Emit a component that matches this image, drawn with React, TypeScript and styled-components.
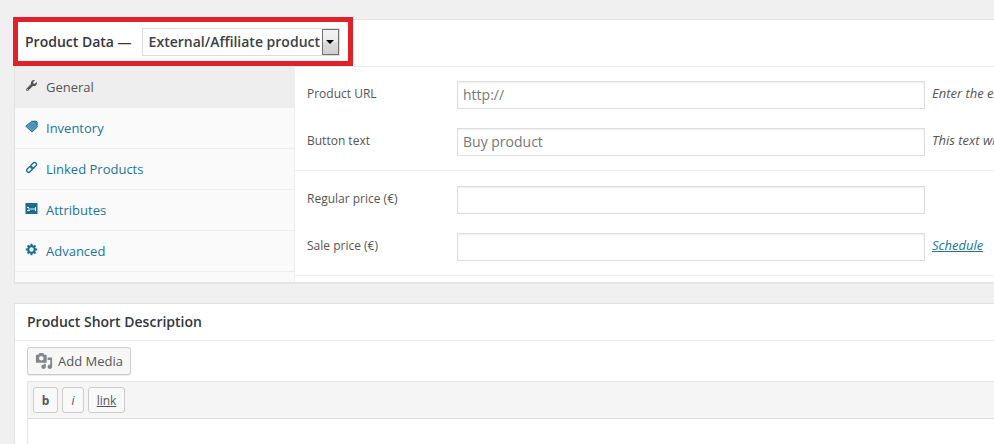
import React from "react";
import styled, { createGlobalStyle } from "styled-components";
import { FaWrench } from "react-icons/fa";

const GlobalStyle = createGlobalStyle`
  * { box-sizing: border-box; }
  html, body { margin: 0; background: #f0f0f0; overflow-x: hidden; }
  body, button, input, select { font-family: "Open Sans", sans-serif; }
`;

const Page = styled.main`
  display: flex;
  flex-direction: column;
  gap: 20px;
  padding: 19px 0 0 14px;
  color: #555;
  font-size: 13px;
`;

const Panel = styled.section`
  background: #fff;
  border: 1px solid #e2e2e2;
  border-right: 0;
  box-shadow: 0 1px 1px rgba(0, 0, 0, 0.04);
`;

const PanelHeader = styled.header`
  display: flex;
  border-bottom: 1px solid #ebebeb;
`;

const TypePicker = styled.div`
  position: relative;
  display: flex;
  align-items: center;
  gap: 10px;
  height: 46px;
  padding: 0 13px 2px 10px;

  &::after {
    content: "";
    position: absolute;
    inset: -3px 0 0 -2px;
    border: 5px solid #e02129;
    pointer-events: none;
  }
`;

const TypeLabel = styled.label`
  color: #32373c;
  font-size: 14px;
  font-weight: 600;
  line-height: 20px;
  white-space: nowrap;
`;

const SelectWrap = styled.div`
  position: relative;
  width: 198px;
`;

const Select = styled.select`
  display: block;
  appearance: none;
  width: 100%;
  height: 28px;
  padding: 0 0 2px 6px;
  border: 1px solid #ddd;
  border-radius: 0;
  background: #fff;
  color: #3c4146;
  font-size: 14px;
  font-weight: 600;
`;

const SelectArrow = styled.span`
  position: absolute;
  top: 1px;
  right: 1px;
  bottom: 1px;
  display: flex;
  align-items: center;
  justify-content: center;
  width: 17px;
  border: 1px solid #707070;
  background: linear-gradient(#f3f3f3 0%, #ebebeb 50%, #dcdcdc 51%, #cfcfcf 100%);
  pointer-events: none;
`;

const PanelBody = styled.div`
  display: flex;
`;

const Tabs = styled.nav`
  flex: 0 0 280px;
  padding-bottom: 10px;
  border-right: 1px solid #eee;
  background: #fafafa;
`;

const Tab = styled.a<{ $active?: boolean }>`
  display: flex;
  align-items: center;
  gap: 8px;
  height: 41px;
  padding: 0 10px;
  border-bottom: 1px solid #eee;
  background: ${(p) => (p.$active ? "#eee" : "transparent")};
  color: ${(p) => (p.$active ? "#555" : "#21759b")};
  line-height: 20px;
  text-decoration: none;

  svg {
    width: 13px;
    height: 13px;
    margin-bottom: 3px;
  }
`;

const WrenchIcon = styled(FaWrench)`
  padding: 1px;
`;

const Fields = styled.div`
  flex: 1;
  min-width: 0;
`;

const FieldGroup = styled.div`
  display: grid;
  gap: 19px;
  padding: 14px 0;
  border-bottom: 1px solid #eee;

  & + & {
    padding-top: 15px;
  }
`;

const Field = styled.div`
  display: flex;
  align-items: center;
  height: 28px;
  padding-left: 12px;
`;

const FieldLabel = styled.label`
  flex: 0 0 150px;
  padding-bottom: 3px;
  font-size: 12px;
  line-height: 18px;
`;

const TextInput = styled.input`
  flex: 1;
  min-width: 0;
  height: 28px;
  padding: 0 5px 2px;
  border: 1px solid #ddd;
  border-radius: 0;
  background: #fff;
  box-shadow: inset 0 1px 2px rgba(0, 0, 0, 0.07);
  color: #32373c;
  font-size: 14px;

  &::placeholder {
    color: #777;
    opacity: 1;
  }
`;

const Note = styled.span`
  flex: 0 0 69px;
  padding: 0 0 4px 7px;
  overflow: hidden;
  font-style: italic;
  line-height: 20px;
  white-space: nowrap;
`;

const NoteLink = styled.a`
  color: #21759b;
`;

const Title = styled.h2`
  margin: 0;
  padding: 8px 12px;
  color: #32373c;
  font-size: 14px;
  font-weight: 600;
  line-height: 20px;
`;

const EditorArea = styled.div`
  padding: 6px 0 0 12px;
`;

const MediaButton = styled.button`
  display: flex;
  align-items: center;
  gap: 5px;
  height: 28px;
  padding: 0 7px;
  border: 1px solid #ccc;
  border-radius: 3px;
  background: #f7f7f7;
  box-shadow: 0 1px 0 rgba(0, 0, 0, 0.08);
  color: #555;
  font-size: 13px;

  svg {
    width: 18px;
    height: 18px;
    fill: #82878c;
  }
`;

const Editor = styled.div`
  margin-top: 6px;
  border: 1px solid #e5e5e5;
  border-right: 0;
`;

const Toolbar = styled.div`
  display: flex;
  gap: 4px;
  padding: 5px;
  border-bottom: 1px solid #ddd;
  background: #f5f5f5;
`;

const toolWidths = { bold: 25, italic: 22, link: 37 };

const ToolButton = styled.button<{ $look: "bold" | "italic" | "link" }>`
  width: ${(p) => toolWidths[p.$look]}px;
  height: 26px;
  padding: 0;
  border: 1px solid #ccc;
  border-radius: 3px;
  background: #f9f9f9;
  color: #555;
  font-size: 12px;
  font-weight: ${(p) => (p.$look === "bold" ? 700 : 400)};
  font-style: ${(p) => (p.$look === "italic" ? "italic" : "normal")};
  text-decoration: ${(p) => (p.$look === "link" ? "underline" : "none")};
`;

const EditorText = styled.textarea`
  display: block;
  width: 100%;
  height: 25px;
  border: 0;
  background: #fff;
  resize: none;
`;

const TagsIcon = () => (
  <svg viewBox="0 0 13 13" aria-hidden="true">
    <path d="M.8 6.200 6.800 1.200l4 .8L12.400 7 7 12z" fill="#5b9cc0" stroke="#1a6d95" strokeLinejoin="round" />
    <path d="M3 6.500 7.500 2.700M4.500 8 9.300 3.900M6 9.600l4.600-4" stroke="#2d7ca4" strokeWidth=".7" />
    <path d="M8.500 1 12 1.500 12.300 5" fill="none" stroke="#1a6d95" />
  </svg>
);

const LinkIcon = () => (
  <svg viewBox="0 0 13 13" fill="none" stroke="#1a6d95" strokeWidth="1.400" aria-hidden="true">
    <rect x="-3.300" y="-1.900" width="6.600" height="3.800" rx="1.900" transform="translate(8.600 4.400) rotate(-45)" />
    <rect x="-3.300" y="-1.900" width="6.600" height="3.800" rx="1.900" transform="translate(4.600 8.400) rotate(-45)" />
  </svg>
);

const AttributesIcon = () => (
  <svg viewBox="0 0 13 13" aria-hidden="true">
    <rect x=".5" y="1" width="12" height="11" rx=".5" fill="#1a6d95" />
    <path d="M2 5.500h2M2 8.500h3M3 7h7M10.500 5v4" stroke="#fff" strokeWidth=".9" />
  </svg>
);

const GearIcon = () => (
  <svg viewBox="0 0 13 13" fill="none" stroke="#1a6d95" aria-hidden="true">
    <circle cx="6.500" cy="6.500" r="3.300" strokeWidth="2.200" />
    <path
      d="M6.500 .8v2M6.500 10.200v2M.8 6.500h2M10.200 6.500h2M2.500 2.500l1.400 1.400M9.100 9.100l1.400 1.400M2.500 10.500l1.400-1.400M9.100 3.900l1.400-1.400"
      strokeWidth="2"
    />
  </svg>
);

const MediaIcon = () => (
  <svg viewBox="0 0 20 20" aria-hidden="true">
    <path d="M13 11V4c0-.55-.45-1-1-1h-1.670L9 1H5L3.670 3H2c-.55 0-1 .45-1 1v7c0 .55.45 1 1 1h10c.55 0 1-.45 1-1zM7 4.500c1.380 0 2.500 1.120 2.500 2.500S8.380 9.500 7 9.500 4.500 8.380 4.500 7 5.620 4.500 7 4.500zM14 6h5v10.500c0 1.380-1.120 2.500-2.500 2.500S14 17.880 14 16.500s1.120-2.500 2.500-2.500c.17 0 .34.02.5.05V9h-3V6zm-4 8.050V13h2v3.500c0 1.380-1.120 2.500-2.500 2.500S7 17.880 7 16.500 8.120 14 9.500 14c.17 0 .34.02.5.05z" />
  </svg>
);

const tabs = [
  { label: "General", icon: <WrenchIcon />, active: true },
  { label: "Inventory", icon: <TagsIcon /> },
  { label: "Linked Products", icon: <LinkIcon /> },
  { label: "Attributes", icon: <AttributesIcon /> },
  { label: "Advanced", icon: <GearIcon /> },
];

export default function App() {
  return (
    <>
      <GlobalStyle />
      <Page>
        <Panel>
          <PanelHeader>
            <TypePicker>
              <TypeLabel htmlFor="product-type">Product Data —</TypeLabel>
              <SelectWrap>
                <Select id="product-type">
                  <option>External/Affiliate product</option>
                </Select>
                <SelectArrow>
                  <svg width="8" height="4" viewBox="0 0 8 4" aria-hidden="true">
                    <path d="M0 0h8L4 4z" />
                  </svg>
                </SelectArrow>
              </SelectWrap>
            </TypePicker>
          </PanelHeader>
          <PanelBody>
            <Tabs>
              {tabs.map((t) => (
                <Tab key={t.label} href="#" $active={t.active}>
                  {t.icon}
                  {t.label}
                </Tab>
              ))}
            </Tabs>
            <Fields>
              <FieldGroup>
                <Field>
                  <FieldLabel htmlFor="url">Product URL</FieldLabel>
                  <TextInput id="url" placeholder="http://" />
                  <Note>Enter the external URL</Note>
                </Field>
                <Field>
                  <FieldLabel htmlFor="button-text">Button text</FieldLabel>
                  <TextInput id="button-text" placeholder="Buy product" />
                  <Note>This text will be shown</Note>
                </Field>
              </FieldGroup>
              <FieldGroup>
                <Field>
                  <FieldLabel htmlFor="regular">Regular price (€)</FieldLabel>
                  <TextInput id="regular" />
                  <Note />
                </Field>
                <Field>
                  <FieldLabel htmlFor="sale">Sale price (€)</FieldLabel>
                  <TextInput id="sale" />
                  <Note>
                    <NoteLink href="#">Schedule</NoteLink>
                  </Note>
                </Field>
              </FieldGroup>
            </Fields>
          </PanelBody>
        </Panel>
        <Panel>
          <PanelHeader>
            <Title>Product Short Description</Title>
          </PanelHeader>
          <EditorArea>
            <MediaButton type="button">
              <MediaIcon />
              Add Media
            </MediaButton>
            <Editor>
              <Toolbar>
                <ToolButton type="button" $look="bold">b</ToolButton>
                <ToolButton type="button" $look="italic">i</ToolButton>
                <ToolButton type="button" $look="link">link</ToolButton>
              </Toolbar>
              <EditorText aria-label="Product Short Description" />
            </Editor>
          </EditorArea>
        </Panel>
      </Page>
    </>
  );
}
